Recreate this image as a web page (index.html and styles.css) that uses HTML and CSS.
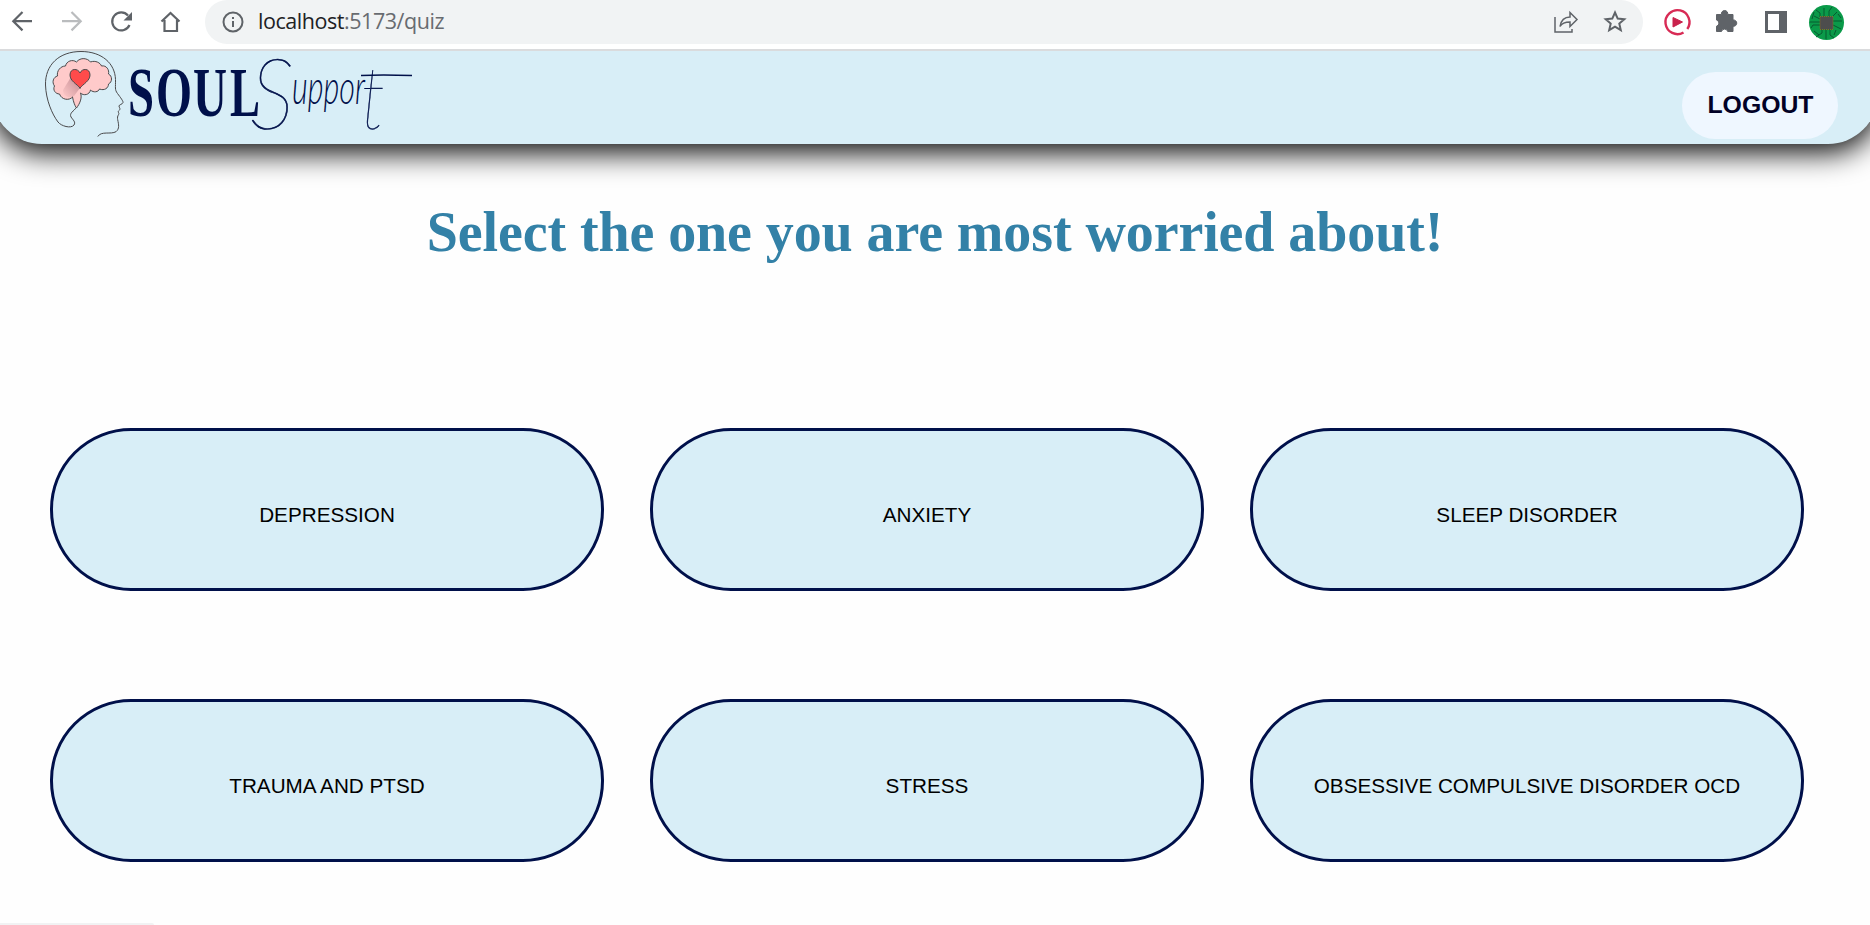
FILE: index.html
```html
<!DOCTYPE html>
<html lang="en">
<head>
<meta charset="utf-8">
<title>Soul Support</title>
<link rel="stylesheet" href="styles.css">
</head>
<body>
<div class="toolbar">
  <svg class="nav-icons" width="205" height="49" viewBox="0 0 205 49" fill="none" stroke="#5f6368" stroke-width="2.200">
    <path d="M32 21.200H13.500M22.500 12l-9.200 9.200 9.200 9.200"/>
    <path stroke="#babcbe" d="M62 21.200h18.500M71.500 12l9.200 9.200-9.200 9.200"/>
    <path d="M129.500 25a9 9 0 1 1-1.500-9.500"/>
    <path fill="#5f6368" stroke="none" d="M132 12v8.500h-8.500z"/>
    <path d="M161.500 21.500l9-8.500 9 8.500M164.500 20v11h12.500v-11"/>
  </svg>
  <div class="address">
    <svg class="info" width="22" height="22" viewBox="0 0 22 22"><circle cx="11" cy="11" r="9.500" fill="none" stroke="#5f6368" stroke-width="2"/><path fill="#5f6368" d="M10 10h2v6h-2zM10 6h2v2h-2z"/></svg>
    <span class="url"><b>localhost</b>:5173/quiz</span>
    <svg class="address-icons" width="80" height="40" viewBox="1550 2 80 40" fill="none" stroke="#5f6368">
      <path stroke-width="1.500" d="M1555 17v15h17v-3M1560 26.500c1-6 4-9.500 10-9.500v-4.500l7 7-7 7v-4.500c-5 0-8 1-10 4.500z"/>
      <path stroke-width="2" d="M1615 12.500l2.700 6.100 6.600.6-5 4.400 1.500 6.500-5.800-3.400-5.800 3.400 1.500-6.500-5-4.400 6.600-.6z"/>
    </svg>
  </div>
  <svg class="ext-icons" width="190" height="49" viewBox="1660 0 190 49">
    <path fill="none" stroke="#d82b55" stroke-width="2.400" d="M1683.500 32.500a12 12 0 1 1 3.800-3.500"/>
    <path fill="#c9214c" stroke="#c9214c" stroke-linejoin="round" d="M1673 17.500l9.500 4.500-9.500 5z"/>
    <path fill="#5f6368" stroke="#5f6368" stroke-linejoin="round" d="M1716.500 14.500h5a3.200 3.200 0 1 1 6.200 0h5.300v5.500a3.200 3.200 0 1 1 0 6.300v5.200h-5.300a3.200 3.200 0 0 0-6.200 0h-5v-5.300a3.200 3.200 0 0 0 0-6.200z"/>
    <path fill="#5f6368" fill-rule="evenodd" d="M1765 11h22v22h-22zM1768 14v16h11V14z"/>
    <circle cx="1826.500" cy="22.500" r="17.500" fill="#0a9a49"/>
    <path fill="none" stroke="#075a30" stroke-width="1" d="M1820 17v-4l-4-3M1824 17V8M1829 17v-6l3-4M1832 17l5-5M1833 21h9M1833 25l8 4M1830 29v6l4 3M1826 29v10M1822 29v4l-6 4M1820 25h-7l-2 3M1820 22h-10M1820 19l-6-3M1814 12l-2 7M1838 14l3 4M1836 30l-2 5M1814 31l5 4"/>
    <rect x="1820" y="16.500" width="13" height="13" fill="#4d4d4d" stroke="#8a6d24" stroke-dasharray="1 1"/>
  </svg>
</div>
<header class="header">
  <svg class="logo" width="385" height="93" viewBox="40 51 385 93" role="img" aria-label="Soul Support">
    <defs><linearGradient id="shade" x1="1" y1="0" x2="0" y2="1"><stop offset="0" stop-color="#c18b92"/><stop offset="1" stop-color="#ffc9c9"/></linearGradient></defs>
    <g stroke="#4a4a4c" stroke-width="1" stroke-linejoin="round" stroke-linecap="round">
      <path fill="none" d="M76 108c-2 3-7 5-5 9 2 3 5 5 3 8-3 4-13 1-16-3-6-8-12-22-12.500-37C45 65 59 51.500 81 51.500c21 0 34 12 34.500 28 .2 8-1 10 2 14 3 4 6 8 5.500 9-.5 2-4 2-4 3.500s1.300 2 .8 3.500c-.5 1.200-1.800 1.300-1.500 2.500s1 1.500.2 2.700c-1 1.500-1.200 3-.8 5 1 5 2 9-1.700 12-5 3-15-1-18 4.500"/>
      <path fill="#ffcaca" d="M72.500 97c-3 4-11 3-13-3-4 0-7-4-5-8-3-4-1-9 3-10-1-5 3-10 8-10 1-5 7-7 11-4 4-5 11-4 14 0 5-2 10 1 11 4 5-1 8 4 7 8 4 2 4 8 0 10 0 4-4 7-9 5-1 3-6 4-9 1-1 5-7 6-10 3 2 5-1 11-4 15-2-3-3-6-4-11z"/>
      <path fill="url(#shade)" stroke="none" d="M71 77l9 11-6 8c-7 3-11-1-11-6z"/>
      <path fill="#ff4b4b" d="M80 88c-3-4-10-7-10-13 0-7 8-7 10-2 2-5 10-5 10 2 0 6-7 9-10 13z"/>
    </g>
    <g fill="#00104a">
      <g class="logo-soul">
        <text x="128" y="116" textLength="26" lengthAdjust="spacingAndGlyphs">S</text>
        <text x="156" y="116" textLength="36" lengthAdjust="spacingAndGlyphs">O</text>
        <text x="193" y="116" textLength="34" lengthAdjust="spacingAndGlyphs">U</text>
        <text x="230" y="116" textLength="30" lengthAdjust="spacingAndGlyphs">L</text>
      </g>
      <g class="logo-support">
        <text class="logo-initial" x="250" y="129" textLength="44" lengthAdjust="spacingAndGlyphs">S</text>
        <text x="292" y="104" textLength="73" lengthAdjust="spacingAndGlyphs">uppor</text>
        <text class="logo-final" x="361" y="129" textLength="24" lengthAdjust="spacingAndGlyphs">t</text>
      </g>
    </g>
    <path d="M361 75.500q20-1 51 0" fill="none" stroke="#00104a" stroke-width="1.500"/>
  </svg>
  <button class="logout">LOGOUT</button>
</header>
<main>
  <h1 class="title">Select the one you are most worried about!</h1>
  <div class="grid">
    <button class="card">DEPRESSION</button>
    <button class="card">ANXIETY</button>
    <button class="card">SLEEP DISORDER</button>
    <button class="card">TRAUMA AND PTSD</button>
    <button class="card">STRESS</button>
    <button class="card">OBSESSIVE COMPULSIVE DISORDER OCD</button>
  </div>
</main>
<div class="status"></div>
</body>
</html>
```

FILE: styles.css
```css
* { box-sizing: border-box; }
body { margin: 0; height: 925px; overflow: hidden; background: #fefefe; position: relative; font-family: "Liberation Sans", Arial, sans-serif; }
svg { display: block; flex: none; }
.toolbar { position: relative; z-index: 2; height: 51px; display: flex; align-items: flex-start; background: #fff; border-bottom: 2px solid #dadbdd; }
.address { width: 1438px; height: 44px; display: flex; align-items: center; padding: 0 13px 0 17px; border-radius: 22px; background: #f1f3f4; }
.url { margin: 0 0 2px 14px; font: 21.5px/30px "Open Sans", "Noto Sans", sans-serif; color: #686b70; letter-spacing: -.45px; }
.url b { font-weight: 400; color: #202124; }
.address-icons { margin-left: auto; }
.ext-icons { margin-left: 17px; }
.header { margin: 0 -8px; height: 93px; display: flex; justify-content: space-between; padding: 0 40px 0 48px; background: #d8eef7; border-radius: 0 0 50px 50px; box-shadow: 0 8px 30px #000; }
.logo { overflow: visible; }
.logo-soul { font: bold 69px "Liberation Serif", serif; }
.logo-support { font: italic 300 48px Lato, sans-serif; }
.logo-initial { font-size: 98px; font-weight: 100; stroke: #00104a; stroke-width: .7px; }
.logo-final { font-size: 86px; font-weight: 100; stroke: #00104a; stroke-width: .5px; }
.logout { margin-top: 21px; width: 156px; height: 67px; border: 0; border-radius: 34px; padding: 0 0 2px 1px; background: #eff7ff; color: #010126; font: bold 24.8px "Liberation Sans", Arial, sans-serif; }
.title { margin: 56px 0 0; height: 64px; line-height: 64px; text-align: center; font-family: "Liberation Serif", serif; font-size: 56px; letter-spacing: -.1px; color: #3381a7; }
.grid { display: grid; grid-template-columns: repeat(3, 554px); grid-auto-rows: 163px; gap: 108px 46px; padding: 164px 0 0 50px; }
.card { border: 3px solid #00104a; border-radius: 81px; background: #d8eef7; padding: 10px 0 0; color: #000; font: 20.7px "Liberation Sans", Arial, sans-serif; }
.status { position: absolute; left: 0; bottom: 0; width: 154px; height: 2px; background: #f1f2f3; border-radius: 0 3px 0 0; }
```
